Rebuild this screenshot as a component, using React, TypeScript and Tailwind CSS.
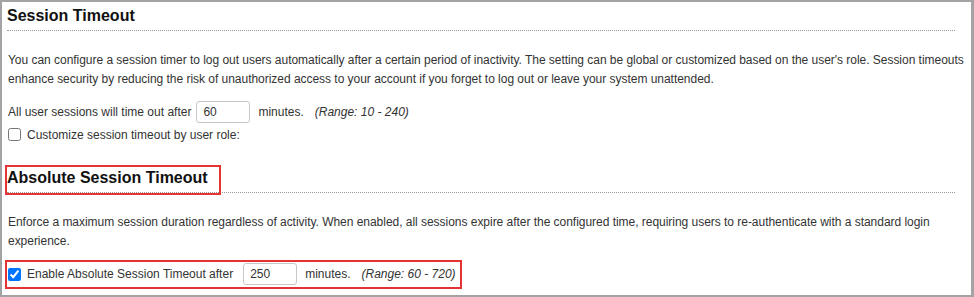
export default function App() {
  return (
    <div
      className="w-[974px] h-[297px] bg-white border-l-2 border-t-2 border-r-[3px] border-b-2 border-[#a3a3a3] pl-[5px] pt-1 text-[12px] text-[#333] overflow-hidden"
      style={{ fontFamily: '"Liberation Sans", Arial, sans-serif' }}
    >
      <h2 className="mr-[16px] text-[16px] leading-[20px] font-bold text-[#111] pb-1 border-b border-dotted border-[#999]">
        Session Timeout
      </h2>
      <p className="mt-5 pl-[1px] leading-[19px] tracking-[-0.03px]">
        You can configure a session timer to log out users automatically after a certain period of inactivity. The
        setting can be global or customized based on the user's role. Session timeouts enhance security by reducing the
        risk of unauthorized access to your account if you forget to log out or leave your system unattended.
      </p>
      <div className="mt-3 pl-[1px] flex items-center h-[22px]">
        <span>All user sessions will time out after</span>
        <input
          type="text"
          defaultValue="60"
          className="ml-[5px] w-[54px] h-[22px] rounded-[3px] border border-[#c8c8c8] px-[6px] text-[12px] text-[#333] outline-none"
        />
        <span className="ml-[8px]">minutes.</span>
        <span className="ml-[11px] italic">(Range: 10 - 240)</span>
      </div>
      <label className="mt-[2px] pl-[1px] flex items-center h-[19px]">
        <input type="checkbox" className="m-0 w-[13px] h-[13px]" />
        <span className="ml-[6px]">Customize session timeout by user role:</span>
      </label>

      <div className="relative mt-6 mr-[16px]">
        <h2 className="text-[16px] leading-[20px] font-bold text-[#111] pb-1 border-b border-dotted border-[#999]">
          Absolute Session Timeout
        </h2>
        <div className="absolute -left-[2px] -top-[3px] -bottom-[2px] w-[216px] border-2 border-[#e53232]" />
      </div>
      <p className="mt-5 pl-[1px] leading-[19px] tracking-[-0.03px]">
        Enforce a maximum session duration regardless of activity. When enabled, all sessions expire after the
        configured time, requiring users to re-authenticate with a standard login experience.
      </p>
      <div className="relative mt-3 pl-[1px] flex items-center h-[22px]">
        <input type="checkbox" defaultChecked className="m-0 w-[13px] h-[13px]" />
        <span className="ml-[6px]">Enable Absolute Session Timeout after</span>
        <input
          type="text"
          defaultValue="250"
          className="ml-[10px] w-[54px] h-[22px] rounded-[3px] border border-[#c8c8c8] px-[6px] text-[12px] text-[#333] outline-none"
        />
        <span className="ml-[8px]">minutes.</span>
        <span className="ml-[11px] italic">(Range: 60 - 720)</span>
        <div className="absolute -left-[2px] -top-[3px] -bottom-[4px] w-[457px] border-2 border-[#e53232]" />
      </div>
    </div>
  );
}
